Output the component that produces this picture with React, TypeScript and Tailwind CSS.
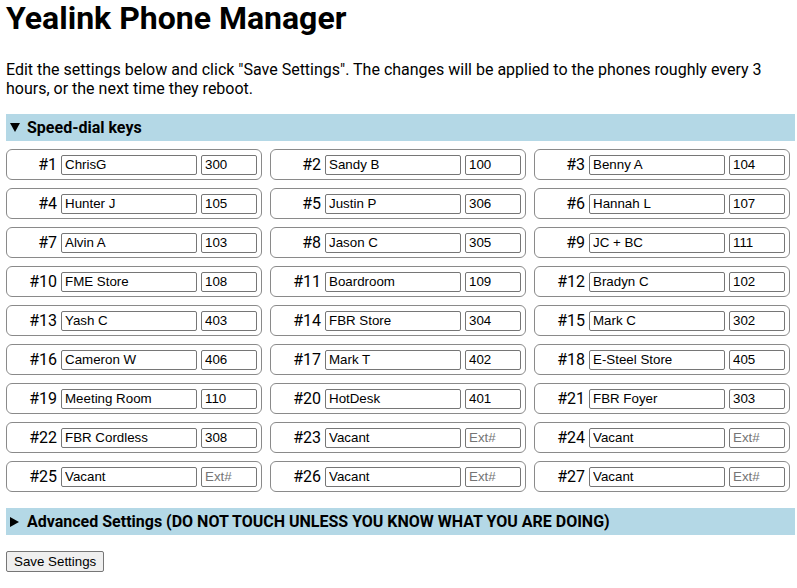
import React from 'react';

const keys: [string, string][] = [
  ['ChrisG', '300'], ['Sandy B', '100'], ['Benny A', '104'],
  ['Hunter J', '105'], ['Justin P', '306'], ['Hannah L', '107'],
  ['Alvin A', '103'], ['Jason C', '305'], ['JC + BC', '111'],
  ['FME Store', '108'], ['Boardroom', '109'], ['Bradyn C', '102'],
  ['Yash C', '403'], ['FBR Store', '304'], ['Mark C', '302'],
  ['Cameron W', '406'], ['Mark T', '402'], ['E-Steel Store', '405'],
  ['Meeting Room', '110'], ['HotDesk', '401'], ['FBR Foyer', '303'],
  ['FBR Cordless', '308'], ['Vacant', ''], ['Vacant', ''],
  ['Vacant', ''], ['Vacant', ''], ['Vacant', ''],
];

const inputCls =
  "h-[20px] border border-[#767676] rounded-[2px] px-[3px] text-[13.33px] text-black placeholder:text-[#757575] font-['Liberation_Sans',Arial,sans-serif] outline-none";

export default function App() {
  return (
    <div className="pl-[6px] pr-[2px] font-['Roboto',sans-serif] text-black bg-white min-h-[588px]">
      <h1 className="-mt-[1px] text-[32px] font-bold leading-[38px]">Yealink Phone Manager</h1>
      <p className="mt-[23px] text-[16px] leading-[19px]">
        Edit the settings below and click "Save Settings". The changes will be applied to the phones roughly every 3
        hours, or the next time they reboot.
      </p>

      <div className="mt-[16px]">
        <div className="h-[27px] bg-[#b4d8e6] flex items-center pl-[4px] text-[16px] font-bold">
          {/* open marker */}
          <svg width="10" height="9" viewBox="0 0 10 9" className="shrink-0 mr-[7px]">
            <path d="M0 0H10L5 9Z" fill="#000" />
          </svg>
          Speed-dial keys
        </div>
        <div className="mt-[8px] w-[784px] grid grid-cols-3 gap-x-[8px] gap-y-[8px]">
          {keys.map(([name, ext], i) => (
            <div
              key={i}
              className="h-[31px] border border-[#8a8a8a] rounded-[6px] flex items-center pr-[4px]"
            >
              <span className="w-[50px] text-right text-[16px] leading-none">#{i + 1}</span>
              <input className={`${inputCls} ml-[4px] w-[136px]`} defaultValue={name} />
              <input className={`${inputCls} ml-[4px] w-[56px]`} defaultValue={ext} placeholder="Ext#" />
            </div>
          ))}
        </div>
      </div>

      <div className="mt-[16px] h-[27px] bg-[#b4d8e6] flex items-center pl-[4px] text-[16px] font-bold">
        {/* closed marker */}
        <svg width="9" height="10" viewBox="0 0 9 10" className="shrink-0 mr-[8px]">
          <path d="M0 0L9 5L0 10Z" fill="#000" />
        </svg>
        Advanced Settings (DO NOT TOUCH UNLESS YOU KNOW WHAT YOU ARE DOING)
      </div>

      <button className="mt-[16px] h-[21px] px-[7px] bg-[#efefef] border border-[#767676] rounded-[2px] text-[13.33px] font-['Liberation_Sans',Arial,sans-serif] leading-none">
        Save Settings
      </button>
    </div>
  );
}
